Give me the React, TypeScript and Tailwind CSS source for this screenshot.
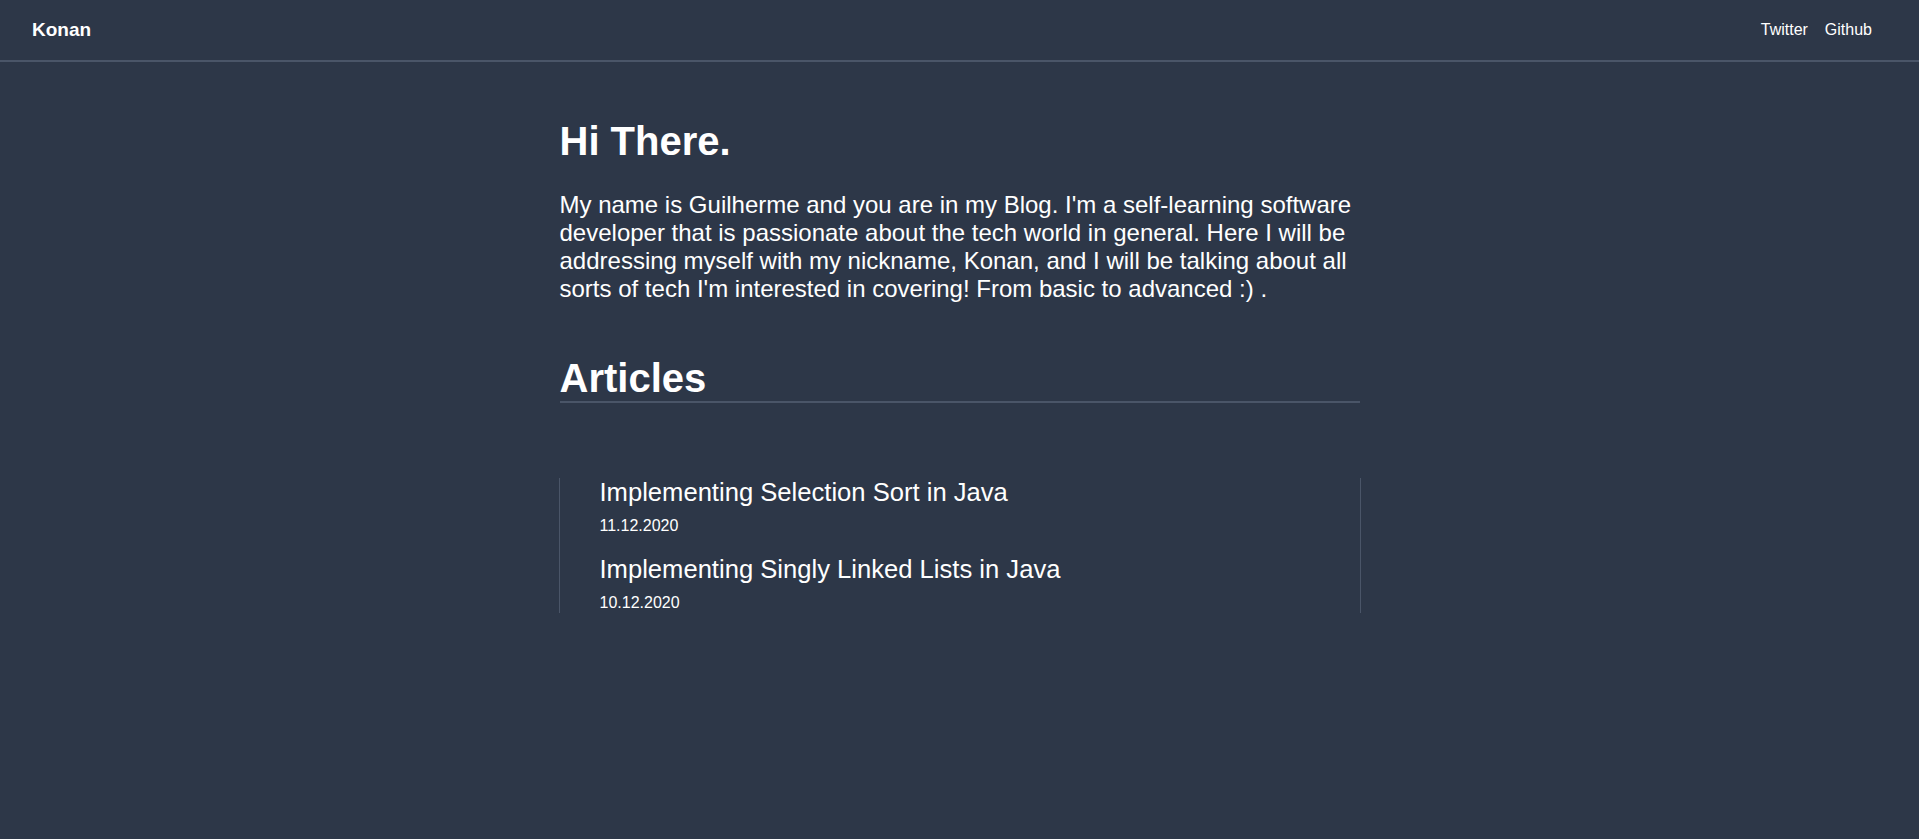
import React from 'react';

interface Article {
  title: string;
  date: string;
}

const articles: Article[] = [
  { title: 'Implementing Selection Sort in Java', date: '11.12.2020' },
  { title: 'Implementing Singly Linked Lists in Java', date: '10.12.2020' },
];

function Header() {
  return (
    <header className="flex items-center justify-between h-[62px] px-8 border-b-2 border-[#4a5568]">
      <span className="text-[19px] font-bold text-white">Konan</span>
      <nav className="flex items-center gap-[17px] pr-[15px] text-base text-white">
        <a href="#">Twitter</a>
        <a href="#">Github</a>
      </nav>
    </header>
  );
}

export default function App() {
  return (
    <div className="min-h-[839px] bg-[#2d3748] text-white font-['Liberation_Sans',Arial,sans-serif]">
      <Header />
      <main className="mx-auto w-[800px] pt-[56px]">
        <h1 className="text-[40px] font-bold leading-[46px]">Hi There.</h1>
        <p className="mt-[27px] text-[24px] leading-[28px]">
          My name is Guilherme and you are in my Blog. I'm a self-learning software developer that is passionate
          about the tech world in general. Here I will be addressing myself with my nickname, Konan, and I will be
          talking about all sorts of tech I'm interested in covering! From basic to advanced :) .
        </p>
        <h2 className="mt-[52px] text-[40px] font-bold leading-[46px] border-b-2 border-[#4a5568]">Articles</h2>
        <ul className="mt-[75px] pl-10 border-x border-[#4a5568] w-[802px] -ml-px pb-px">
          {articles.map((a, i) => (
            <li key={i} className={i > 0 ? 'mt-[20px]' : ''}>
              <h3 className="text-[25.6px] leading-[29px]">{a.title}</h3>
              <p className="mt-[10px] text-[16px] leading-[18px]">{a.date}</p>
            </li>
          ))}
        </ul>
      </main>
    </div>
  );
}
